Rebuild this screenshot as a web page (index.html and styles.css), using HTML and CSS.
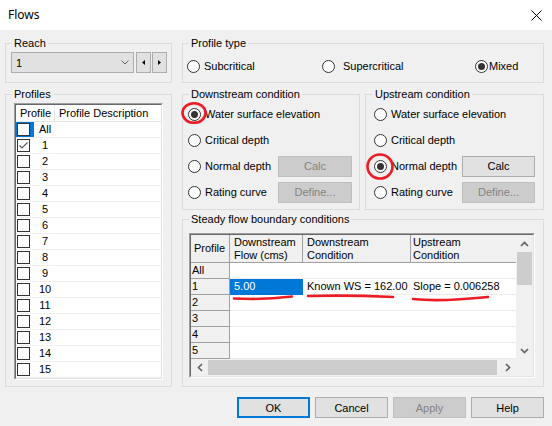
FILE: index.html
```html
<!DOCTYPE html>
<html>
<head>
<meta charset="utf-8">
<title>Flows</title>
<link rel="stylesheet" href="styles.css">
</head>
<body>
<div class="window">
  <div class="titlebar">
    <span class="title">Flows</span>
    <svg class="close" width="11" height="11" viewBox="0 0 11 11"><path d="M0.5 0.5L10.5 10.5M10.5 0.5L0.5 10.5" stroke="#000" stroke-width="1" fill="none"/></svg>
  </div>
  <div class="dialog">
    <div class="main">
      <div class="col-left">
        <fieldset class="grp grp-reach">
          <legend>Reach</legend>
          <div class="reach-row">
            <div class="combo"><span>1</span><svg class="chev" width="8" height="5" viewBox="0 0 8 5"><path d="M0.5 0.5L4 4L7.5 0.5" stroke="#606060" fill="none"/></svg></div>
            <div class="spin"><svg width="3" height="5" viewBox="0 0 3 5"><path d="M3 0L0 2.5L3 5Z" fill="#000"/></svg></div>
            <div class="spin"><svg width="3" height="5" viewBox="0 0 3 5"><path d="M0 0L3 2.5L0 5Z" fill="#000"/></svg></div>
          </div>
        </fieldset>
        <fieldset class="grp grp-profiles">
          <legend>Profiles</legend>
          <div class="plist"><div class="plist-in">
            <div class="phead"><span class="ph-prof">Profile</span><span class="ph-desc">Profile Description</span></div>
            <div class="prow"><span class="cbw focus"><span class="cb"></span></span><span class="pnum">All</span></div>
            <div class="prow"><span class="cbw"><span class="cb"><svg width="11" height="11" viewBox="0 0 11 11"><path d="M1.5 5.5L4 8L9.5 2.5" stroke="#5c5c5c" stroke-width="1.2" fill="none"/></svg></span></span><span class="pnum">1</span></div>
            <div class="prow"><span class="cbw"><span class="cb"></span></span><span class="pnum">2</span></div>
            <div class="prow"><span class="cbw"><span class="cb"></span></span><span class="pnum">3</span></div>
            <div class="prow"><span class="cbw"><span class="cb"></span></span><span class="pnum">4</span></div>
            <div class="prow"><span class="cbw"><span class="cb"></span></span><span class="pnum">5</span></div>
            <div class="prow"><span class="cbw"><span class="cb"></span></span><span class="pnum">6</span></div>
            <div class="prow"><span class="cbw"><span class="cb"></span></span><span class="pnum">7</span></div>
            <div class="prow"><span class="cbw"><span class="cb"></span></span><span class="pnum">8</span></div>
            <div class="prow"><span class="cbw"><span class="cb"></span></span><span class="pnum">9</span></div>
            <div class="prow"><span class="cbw"><span class="cb"></span></span><span class="pnum">10</span></div>
            <div class="prow"><span class="cbw"><span class="cb"></span></span><span class="pnum">11</span></div>
            <div class="prow"><span class="cbw"><span class="cb"></span></span><span class="pnum">12</span></div>
            <div class="prow"><span class="cbw"><span class="cb"></span></span><span class="pnum">13</span></div>
            <div class="prow"><span class="cbw"><span class="cb"></span></span><span class="pnum">14</span></div>
            <div class="prow"><span class="cbw"><span class="cb"></span></span><span class="pnum">15</span></div>
          </div></div>
        </fieldset>
      </div>
      <div class="col-right">
        <fieldset class="grp grp-ptype">
          <legend>Profile type</legend>
          <div class="ptype-row">
            <label class="opt"><span class="radio"></span>Subcritical</label>
            <label class="opt opt-wide"><span class="radio"></span>Supercritical</label>
            <label class="opt opt-tight"><span class="radio on"></span>Mixed</label>
          </div>
        </fieldset>
        <div class="cond-row">
          <fieldset class="grp grp-down">
            <legend>Downstream condition</legend>
            <div class="crow"><label class="opt"><span class="radio on"></span>Water surface elevation</label></div>
            <div class="crow"><label class="opt"><span class="radio"></span>Critical depth</label></div>
            <div class="crow"><label class="opt"><span class="radio"></span>Normal depth</label><button class="btn cbtn" disabled>Calc</button></div>
            <div class="crow"><label class="opt"><span class="radio"></span>Rating curve</label><button class="btn cbtn" disabled>Define...</button></div>
          </fieldset>
          <fieldset class="grp grp-up">
            <legend>Upstream condition</legend>
            <div class="crow"><label class="opt"><span class="radio"></span>Water surface elevation</label></div>
            <div class="crow"><label class="opt"><span class="radio"></span>Critical depth</label></div>
            <div class="crow"><label class="opt"><span class="radio on"></span>Normal depth</label><button class="btn cbtn">Calc</button></div>
            <div class="crow"><label class="opt"><span class="radio"></span>Rating curve</label><button class="btn cbtn" disabled>Define...</button></div>
          </fieldset>
        </div>
        <fieldset class="grp grp-steady">
          <legend>Steady flow boundary conditions</legend>
          <div class="tbl"><div class="tbl-in">
            <div class="tgrid">
              <div class="th th-prof">Profile</div>
              <div class="th">Downstream<br>Flow (cms)</div>
              <div class="th">Downstream<br>Condition</div>
              <div class="th th-last">Upstream<br>Condition</div>
              <div class="vscroll">
                <div class="sarrow"><svg width="9" height="6" viewBox="0 0 9 6"><path d="M1 5L4.5 1.5L8 5" stroke="#606060" stroke-width="1.6" fill="none"/></svg></div>
                <div class="vthumb"></div>
                <div class="sfill"></div>
                <div class="sarrow"><svg width="9" height="6" viewBox="0 0 9 6"><path d="M1 1L4.5 4.5L8 1" stroke="#606060" stroke-width="1.6" fill="none"/></svg></div>
              </div>
              <div class="rh">All</div><div class="td"></div><div class="td"></div><div class="td c4"></div>
              <div class="rh">1</div><div class="td sel">5.00</div><div class="td">Known WS = 162.00</div><div class="td c4">Slope = 0.006258</div>
              <div class="rh">2</div><div class="td"></div><div class="td"></div><div class="td c4"></div>
              <div class="rh">3</div><div class="td"></div><div class="td"></div><div class="td c4"></div>
              <div class="rh">4</div><div class="td"></div><div class="td"></div><div class="td c4"></div>
              <div class="rh">5</div><div class="td"></div><div class="td"></div><div class="td c4"></div>
              <div class="hscroll">
                <div class="harrow"><svg width="6" height="9" viewBox="0 0 6 9"><path d="M5 1L1.5 4.5L5 8" stroke="#606060" stroke-width="1.6" fill="none"/></svg></div>
                <div class="hthumb"></div>
                <div class="harrow"><svg width="6" height="9" viewBox="0 0 6 9"><path d="M1 1L4.5 4.5L1 8" stroke="#606060" stroke-width="1.6" fill="none"/></svg></div>
              </div>
              <div class="corner"></div>
            </div>
          </div></div>
        </fieldset>
      </div>
    </div>
    <div class="buttons">
      <button class="btn dbtn default">OK</button>
      <button class="btn dbtn">Cancel</button>
      <button class="btn dbtn" disabled>Apply</button>
      <button class="btn dbtn">Help</button>
    </div>
  </div>
  <svg class="annot" width="552" height="426" viewBox="0 0 552 426">
    <g fill="none" stroke="#ed1c24" stroke-width="2.6" stroke-linecap="round">
      <ellipse cx="194" cy="113" rx="11.5" ry="9.8"/>
      <ellipse cx="380" cy="166.5" rx="12.5" ry="12"/>
      <path d="M234 298.5 Q262 300 292 296.5"/>
      <path d="M308 296 Q350 295 393 297"/>
      <path d="M413 299 Q440 302 488 297"/>
    </g>
  </svg>
</div>
</body>
</html>
```

FILE: styles.css
```css
* { box-sizing: border-box; }
html, body { margin: 0; padding: 0; }
body {
  font-family: "Liberation Sans", Arial, sans-serif;
  font-size: 11px;
  color: #000;
  background: #f0f0f0;
}
.window {
  position: relative;
  width: 552px;
  height: 426px;
  overflow: hidden;
  background: #f0f0f0;
}
.titlebar {
  height: 30px;
  background: #fff;
  display: flex;
  align-items: center;
  justify-content: space-between;
  padding: 0 10px 0 8px;
}
.title {
  font-family: "Noto Sans", "Open Sans", sans-serif;
  font-size: 12px;
  line-height: 16px;
}
.close { display: block; }

.dialog { padding: 7px 8px 0 5px; }
.main { display: flex; gap: 10px; }
.col-left { width: 167px; display: flex; flex-direction: column; gap: 5px; }
.col-right { width: 362px; display: flex; flex-direction: column; }

fieldset.grp {
  margin: 0;
  min-width: 0;
  border: 1px solid #dcdcdc;
  padding: 0;
}
.grp legend {
  padding: 0 2px;
  font-size: 11px;
  line-height: 13px;
}

/* Reach */
fieldset.grp-reach { padding: 2px 0 9px 5px; }
.grp-reach legend { margin-left: 1px; }
.reach-row { display: flex; gap: 1px; }
.combo {
  width: 123px;
  height: 21px;
  background: #e1e1e1;
  border: 1px solid #adadad;
  display: flex;
  align-items: center;
  padding-left: 4px;
  padding-right: 4px;
  margin-right: 1px;
}
.combo .chev { margin-left: auto; display: block; }
.spin {
  width: 15px;
  height: 21px;
  background: #e1e1e1;
  border: 1px solid #adadad;
  display: flex;
  align-items: center;
  justify-content: center;
}
.spin svg { display: block; }

/* Profiles list */
fieldset.grp-profiles { padding: 2px 0 6px 8px; }
.grp-profiles legend { margin-left: -2px; }
.plist {
  width: 149px;
  border: 1px solid;
  border-color: #a0a0a0 #fff #fff #a0a0a0;
  background: #fff;
}
.plist-in {
  border: 1px solid;
  border-color: #696969 #e3e3e3 #e3e3e3 #696969;
}
.phead {
  height: 17px;
  display: flex;
  border-bottom: 1px solid #e5e5e5;
  line-height: 16px;
}
.ph-prof { width: 39px; padding-left: 4px; border-right: 1px solid #e5e5e5; }
.ph-desc { padding-left: 4px; }
.prow {
  height: 16px;
  display: flex;
  border-bottom: 1px solid #f0f0f0;
  line-height: 15px;
}
.cbw {
  width: 19px;
  height: 15px;
  margin-left: -1px;
  padding: 1px 0 0 2px;
  display: flex;
  align-items: flex-start;
}
.cbw.focus { background: #0078d7; }
.cb {
  width: 13px;
  height: 13px;
  border: 1px solid #333;
  background: #fff;
  display: flex;
  align-items: center;
  justify-content: center;
}
.cb svg { display: block; }
.pnum { width: 22px; text-align: center; }

/* Radios */
.opt {
  display: flex;
  align-items: center;
  gap: 4px;
  height: 13px;
  line-height: 13px;
  white-space: nowrap;
}
.opt-wide { gap: 8px; }
.opt-tight { gap: 1px; }
.radio {
  flex: none;
  width: 13px;
  height: 13px;
  border: 1px solid #333;
  border-radius: 50%;
  background: #fff;
  display: flex;
  align-items: center;
  justify-content: center;
}
.radio.on::after {
  content: "";
  width: 7px;
  height: 7px;
  border-radius: 50%;
  background: #333;
}

/* Profile type */
fieldset.grp-ptype { padding: 10px 0 9px 4px; }
.grp-ptype legend { margin-left: 2px; }
.ptype-row {
  display: grid;
  grid-template-columns: 135px 153px auto;
}

/* Conditions */
.cond-row { display: flex; gap: 5px; margin-top: 5px; }
fieldset.grp-down { width: 178px; padding: 0 7px 4px 5px; }
.grp-down legend { margin-left: 1px; }
fieldset.grp-up { width: 179px; padding: 0 8px 4px 8px; }
.grp-up legend { margin-left: -1px; }
.crow { height: 26px; display: flex; align-items: center; }
.cbtn { margin-left: auto; width: 74px; }
.grp-up .cbtn { width: 73px; }

/* Buttons */
.btn {
  height: 21px;
  padding: 0;
  font-family: "Liberation Sans", Arial, sans-serif;
  font-size: 11px;
  color: #000;
  background: #e1e1e1;
  border: 1px solid #adadad;
  border-radius: 0;
}
.btn:disabled {
  background: #cccccc;
  border-color: #bfbfbf;
  color: #838383;
}
.btn.default { border: 2px solid #0078d7; }
.buttons {
  display: flex;
  justify-content: flex-end;
  gap: 5px;
  margin-top: 10px;
}
.dbtn { width: 73px; }

/* Steady flow table */
fieldset.grp-steady { margin-top: 3px; padding: 7px 0 8px 6px; }
.tbl {
  width: 346px;
  border: 1px solid;
  border-color: #a0a0a0 #fff #fff #a0a0a0;
  background: #fff;
}
.tbl-in {
  border: 1px solid;
  border-color: #696969 #e3e3e3 #e3e3e3 #696969;
}
.tgrid {
  display: grid;
  grid-template-columns: 39px 73px 108px 105px 17px;
  grid-template-rows: 28px repeat(6, 16px) 17px;
}
.th {
  background: #f0f0f0;
  border-right: 1px solid #a0a0a0;
  border-bottom: 1px solid #a0a0a0;
  padding-left: 4px;
  display: flex;
  align-items: center;
  line-height: 13px;
  white-space: nowrap;
  overflow: hidden;
}
.th-prof { padding-left: 3px; }
.th-last { border-right: none; padding-left: 2px; }
.rh {
  background: #f0f0f0;
  border-right: 1px solid #a0a0a0;
  border-bottom: 1px solid #a0a0a0;
  padding-left: 1px;
  line-height: 15px;
}
.td {
  background: #fff;
  border-bottom: 1px solid #ebebeb;
  padding-left: 4px;
  line-height: 15px;
  white-space: nowrap;
  overflow: hidden;
}
.td.c4 { padding-left: 2px; }
.td.sel {
  background: #0078d7;
  border-bottom-color: #0078d7;
  color: #fff;
}
.vscroll {
  grid-column: 5;
  grid-row: 1 / 8;
  background: #f0f0f0;
  display: flex;
  flex-direction: column;
}
.sarrow {
  height: 17px;
  display: flex;
  align-items: center;
  justify-content: center;
}
.sarrow svg, .harrow svg { display: block; }
.vthumb { height: 33px; margin: 0 1px; background: #cdcdcd; }
.sfill { flex: 1; }
.hscroll {
  grid-column: 1 / 5;
  grid-row: 8;
  background: #f0f0f0;
  display: flex;
}
.harrow {
  width: 17px;
  display: flex;
  align-items: center;
  justify-content: center;
}
.hthumb { flex: 1; margin: 1px 2px 1px 0; background: #cdcdcd; }
.corner { grid-column: 5; grid-row: 8; background: #f0f0f0; }

/* Hand-drawn red annotations over the screenshot */
.annot {
  position: absolute;
  left: 0;
  top: 0;
  pointer-events: none;
}
```
